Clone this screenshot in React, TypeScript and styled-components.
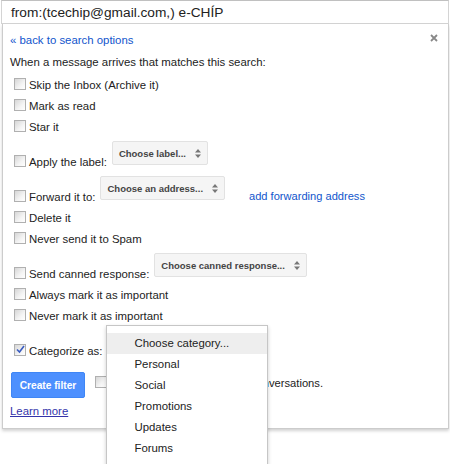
import styled, { createGlobalStyle } from 'styled-components';

const GlobalStyle = createGlobalStyle`
    html, body {
        margin: 0;
        padding: 0;
        background: #fff;
    }
    body {
        font-family: "Liberation Sans", Arial, sans-serif;
        color: #222;
    }
`;

const Page = styled.div`
    width: 450px;
    height: 464px;
    position: relative;
`;

const SearchBox = styled.div`
    margin: 0 1px;
    height: 22px;
    border: 1px solid #d4d4d4;
    border-top-color: #c0c0c0;
    padding-left: 9px;
    display: flex;
    align-items: center;
    font-size: 13.7px;
    color: #222;
`;

const Panel = styled.div`
    margin: 0 1px 0 2px;
    border: 1px solid #ccc;
    border-top: none;
    box-shadow: 0 2px 3px rgba(0, 0, 0, 0.18);
    padding: 9px 10px 10px 7px;
    position: relative;
    font-size: 11.4px;
`;

const TopLine = styled.div`
    display: flex;
    justify-content: space-between;
    align-items: center;
    height: 14px;
`;

const Link = styled.a`
    color: #15c;
    text-decoration: none;
    cursor: pointer;
`;

const Close = styled.span`
    display: flex;
    margin-right: 0;
    margin-top: -5px;
`;

const Intro = styled.div`
    margin-top: 8px;
    line-height: 14px;
    margin-bottom: 5px;
`;

const Row = styled.div<{ $select?: boolean }>`
    display: flex;
    align-items: flex-end;
    padding-left: 4px;
    height: ${p => (p.$select ? '35px' : '21px')};
`;

const RowLabel = styled.label`
    display: flex;
    align-items: center;
    height: 21px;
    gap: 3px;
`;

const Box = styled.span<{ $checked?: boolean }>`
    width: 10px;
    height: 10px;
    border: 1px solid #b0b0b0;
    background: linear-gradient(135deg, #d6d6d6 0%, #f4f4f4 60%, #fff 100%);
    display: inline-flex;
    align-items: center;
    justify-content: center;
    margin-top: -2px;
`;

const Select = styled.div`
    display: inline-flex;
    align-items: center;
    height: 22px;
    margin: 0 0 7px 5px;
    padding: 0 6px 0 6px;
    background: #f5f5f5;
    border: 1px solid #e2e2e2;
    border-radius: 2px;
    font-size: 9.5px;
    font-weight: bold;
    color: #444;
    gap: 9px;
`;

const CategorySelect = styled(Select)`
    border-left-color: #4d90fe;
    position: relative;
    margin-bottom: 9px;
`;

const ForwardLink = styled(Link)`
    margin-left: 24px;
    line-height: 21px;
    font-size: 11.1px;
`;

const Actions = styled.div`
    display: flex;
    align-items: center;
    margin-top: 11px;
    gap: 10px;
    padding-left: 1px;
`;

const Button = styled.button`
    width: 74px;
    height: 26px;
    background: #4d90fe;
    border: 1px solid #3f86f5;
    border-radius: 2px;
    color: #fff;
    font-family: "Liberation Sans", Arial, sans-serif;
    font-size: 10.2px;
    font-weight: bold;
    padding: 0;
`;

const AlsoApply = styled.label`
    display: flex;
    align-items: center;
    gap: 4px;
    margin-top: -4px;
    font-size: 11.2px;
`;

const Learn = styled.a`
    display: block;
    margin-top: 6px;
    color: #33a;
    text-decoration: underline;
    line-height: 14px;
`;

const Menu = styled.div`
    position: absolute;
    left: -2px;
    top: -4px;
    width: 160px;
    height: 137px;
    background: #fff;
    border: 1px solid #c6c6c6;
    box-shadow: 0 2px 4px rgba(0, 0, 0, 0.2);
    padding-top: 7px;
    font-size: 11.4px;
    font-weight: normal;
    color: #222;
    z-index: 2;
`;

const MenuItem = styled.div<{ $active?: boolean }>`
    height: 21px;
    line-height: 21px;
    padding-left: 27px;
    background: ${p => (p.$active ? '#eee' : 'transparent')};
`;

const Arrows = () => (
    <svg width="6" height="9" viewBox="0 0 6 9">
        <path d="M0 3.5 L3 0 L6 3.5 Z M0 5.5 L3 9 L6 5.5 Z" fill="#777" />
    </svg>
);

const Check = ({ checked }: { checked?: boolean }) => (
    <Box $checked={checked}>
        {checked && (
            <svg width="9" height="9" viewBox="0 0 9 9">
                <path d="M1 4.5 L3.5 7 L8 1" fill="none" stroke="#3a5cc0" strokeWidth="1.6" />
            </svg>
        )}
    </Box>
);

const Option = ({ text, checked }: { text: string; checked?: boolean }) => (
    <RowLabel>
        <Check checked={checked} />
        {text}
    </RowLabel>
);

const categories = ['Personal', 'Social', 'Promotions', 'Updates', 'Forums'];

export default function App() {
    return (
        <Page>
            <GlobalStyle />
            <SearchBox>from:(tcechip@gmail.com,) e-CHÍP</SearchBox>
            <Panel>
                <TopLine>
                    <Link>« back to search options</Link>
                    <Close>
                        <svg width="8" height="8" viewBox="0 0 8 8">
                            <path d="M1 1 L7 7 M7 1 L1 7" stroke="#888" strokeWidth="1.8" />
                        </svg>
                    </Close>
                </TopLine>
                <Intro>When a message arrives that matches this search:</Intro>
                <Row><Option text="Skip the Inbox (Archive it)" /></Row>
                <Row><Option text="Mark as read" /></Row>
                <Row><Option text="Star it" /></Row>
                <Row $select>
                    <Option text="Apply the label:" />
                    <Select>Choose label... <Arrows /></Select>
                </Row>
                <Row $select>
                    <Option text="Forward it to:" />
                    <Select>Choose an address... <Arrows /></Select>
                    <ForwardLink>add forwarding address</ForwardLink>
                </Row>
                <Row><Option text="Delete it" /></Row>
                <Row><Option text="Never send it to Spam" /></Row>
                <Row $select>
                    <Option text="Send canned response:" />
                    <Select>Choose canned response... <Arrows /></Select>
                </Row>
                <Row><Option text="Always mark it as important" /></Row>
                <Row><Option text="Never mark it as important" /></Row>
                <Row $select>
                    <Option text="Categorize as:" checked />
                    <CategorySelect>
                        Choose category... <Arrows />
                        <Menu>
                            <MenuItem $active>Choose category...</MenuItem>
                            {categories.map(c => (
                                <MenuItem key={c}>{c}</MenuItem>
                            ))}
                        </Menu>
                    </CategorySelect>
                </Row>
                <Actions>
                    <Button>Create filter</Button>
                    <AlsoApply>
                        <Check />
                        Also apply filter to matching conversations.
                    </AlsoApply>
                </Actions>
                <Learn>Learn more</Learn>
            </Panel>
        </Page>
    );
}
